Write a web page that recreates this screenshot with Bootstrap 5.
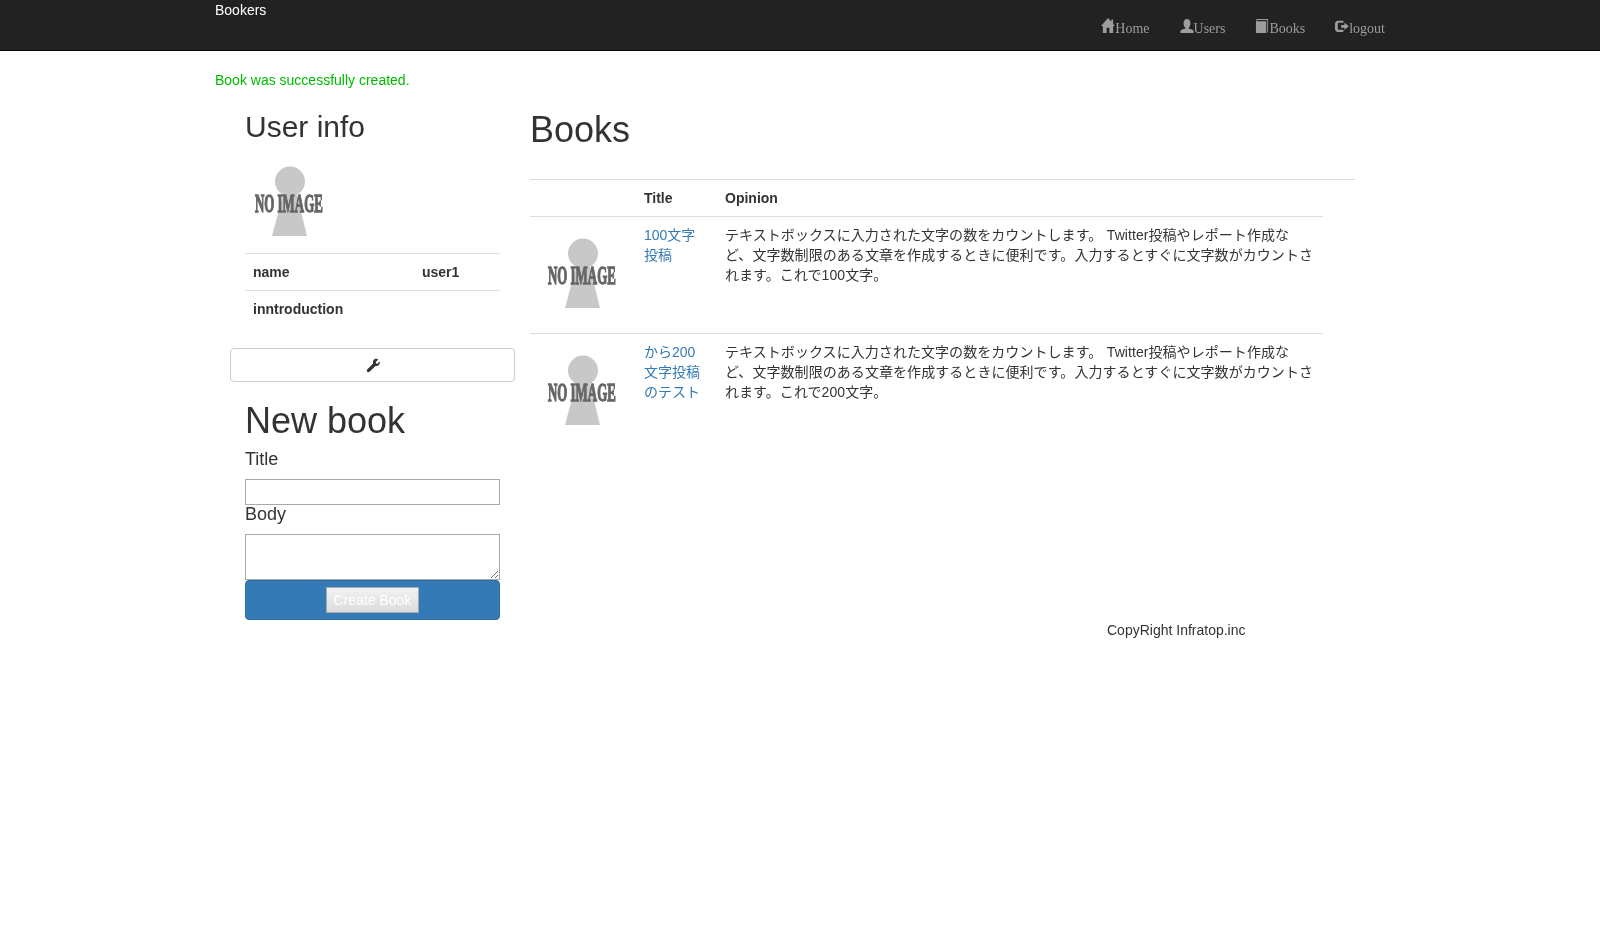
<!DOCTYPE html>
<html lang="en">

<head>
    <meta charset="UTF-8">
    <meta name="viewport" content="width=device-width, initial-scale=1.0">
    <title>Bookers</title>
    <link href="https://cdn.jsdelivr.net/npm/bootstrap@5.3.0/dist/css/bootstrap.min.css" rel="stylesheet">
    <style>
        body {
            font-family: "Liberation Sans", "Noto Sans CJK JP", sans-serif;
            font-size: 14px;
            line-height: 20px;
            color: #333;
        }

        .top-bar {
            height: 51px;
            background: #222;
            border-bottom: 1px solid #080808;
        }

        .page-wrap {
            width: 1170px;
            margin: 0 auto;
            will-change: transform;
        }

        .brand-link {
            color: #fff;
            text-decoration: none;
            display: block;
            height: 20px;
        }

        .menu-list {
            margin: 11px -15px 0 0;
        }

        .menu-link {
            display: flex;
            align-items: flex-end;
            height: 28px;
            padding: 0 15px;
            color: #9d9d9d;
            text-decoration: none;
            font-family: "Liberation Serif", serif;
            font-size: 14px;
            line-height: 20px;
        }

        .menu-link svg {
            display: block;
            width: 14px;
            height: 15px;
            margin-bottom: 6px;
            fill: #9d9d9d;
        }

        .flash-note {
            color: #0b0;
            margin: 19px 0 0;
            height: 20px;
        }

        .side-col {
            width: 285px;
            padding: 0 15px;
            margin-left: 15px;
            flex: none;
        }

        .main-col {
            width: 855px;
            padding: 0 15px;
            flex: none;
        }

        .side-title {
            font-size: 30px;
            line-height: 33px;
            font-weight: 500;
            margin: 20px 0 10px;
        }

        .noimage {
            display: block;
        }

        .noimage text {
            font-family: "Liberation Serif", serif;
            font-weight: 700;
            font-size: 19px;
            fill: #666;
            stroke: #666;
            stroke-width: 1;
        }

        .user-table {
            width: 255px;
            margin-bottom: 21px;
            table-layout: fixed;
        }

        .book-table td,
        .book-table th {
            padding: 8px;
            border-top: 1px solid #ddd;
            vertical-align: top;
            line-height: 20px;
        }

        .user-table th,
        .user-table td {
            padding: 8px;
            border-top: 1px solid #ddd;
            font-weight: 700;
            line-height: 20px;
        }

        .edit-btn {
            display: flex;
            align-items: center;
            justify-content: center;
            height: 34px;
            margin: 0 -15px;
            border: 1px solid #ccc;
            border-radius: 4px;
            background: #fff;
        }

        .new-title {
            font-size: 36px;
            line-height: 40px;
            font-weight: 500;
            margin: 19px 0 9px;
        }

        .field-label {
            display: block;
            font-size: 18px;
            line-height: 20px;
            margin: -1px 0 10px;
        }

        .field-box {
            display: block;
            width: 255px;
            height: 26px;
            border: 1px solid #a9a9a9;
            border-radius: 0;
            padding: 1px 2px;
            margin: 0;
        }

        textarea.field-box {
            height: 46px;
        }

        .submit-wrap {
            display: flex;
            align-items: center;
            justify-content: center;
            height: 40px;
            background: #337ab7;
            border: 1px solid #2e6da4;
            border-radius: 4px;
        }

        .submit-btn {
            width: 93px;
            height: 26px;
            padding: 0;
            color: #fff;
            font-size: 14px;
            line-height: 20px;
            border: 1px solid #a9a9a9;
            background: linear-gradient(#f2f2f2, #dcdcdc);
        }

        .main-title {
            font-size: 36px;
            line-height: 40px;
            font-weight: 500;
            margin: 20px 0 10px;
        }

        .head-rule {
            height: 1px;
            width: 825px;
            background: #ddd;
            margin: 29px 0 0;
        }

        .book-table {
            width: 793px;
            table-layout: fixed;
        }

        .book-table thead th {
            border-top: 0;
            border-bottom: 1px solid #ddd;
            font-weight: 700;
        }

        .book-table a {
            color: #337ab7;
            text-decoration: none;
        }

        .opinion-text {
            word-spacing: 0.5px;
            letter-spacing: 0.06px;
        }

        .copy-line {
            margin: 0;
            height: 20px;
            padding-left: 892px;
        }
    </style>
</head>

<body>
    <nav class="top-bar">
        <div class="page-wrap d-flex justify-content-between align-items-start">
            <a class="brand-link" href="#">Bookers</a>
            <ul class="menu-list d-flex list-unstyled">
                <li><a class="menu-link" href="#">
                        <svg viewBox="0 1 15 14" preserveAspectRatio="none"><path d="M7.500 1 11 4.500V2.500h2v4l2 2h-2V15H9V10H6v5H2V8.500H0z"/></svg>Home</a></li>
                <li><a class="menu-link" href="#">
                        <svg viewBox="0 1 15 14" preserveAspectRatio="none"><path d="M7.500 2C9.900 2 11.200 3.600 11.200 5.800c0 2-.8 3.400-1.800 4.200v1c2.500.4 4.800 1 5.100 2.200V15H.5v-1.800c.3-1.200 2.600-1.800 5.100-2.200v-1C4.600 9.200 3.800 7.800 3.800 5.800 3.800 3.600 5.100 2 7.500 2z"/></svg>Users</a></li>
                <li><a class="menu-link" href="#">
                        <svg viewBox="0 1 15 14" preserveAspectRatio="none"><path d="M1 3.500C1 2.600 1.800 2 3 2h11v12.500h-.9V2.900H3c-.5 0-.9.2-1 .6z M1 4h11v11H1z"/></svg>Books</a></li>
                <li><a class="menu-link" href="#">
                        <svg viewBox="0 1 15 14" preserveAspectRatio="none"><path d="M3 3.500h6v2H4.200C3.500 5.500 3 6 3 6.700v4.100c0 .7.500 1.200 1.200 1.200H9v2H3c-1.700 0-3-1.300-3-3V6.500c0-1.700 1.300-3 3-3z M6.500 7.500H10V5.500l5 3.300-5 3.200v-2H6.500z"/></svg>logout</a></li>
            </ul>
        </div>
    </nav>

    <div class="page-wrap">
        <p class="flash-note">Book was successfully created.</p>
        <div class="d-flex align-items-start">
            <div class="side-col">
                <h2 class="side-title">User info</h2>
                <svg class="noimage" width="100" height="100" viewBox="0 0 100 100"><circle cx="45" cy="28.500" r="15" fill="#c8c8c8"/><path d="M38 42h14l10 41H27z" fill="#c8c8c8"/><text transform="translate(10 59) scale(.68 1.35)">NO IMAGE</text></svg>
                <table class="user-table">
                    <colgroup><col style="width:169px"><col></colgroup>
                    <tbody>
                        <tr><th>name</th><th>user1</th></tr>
                        <tr><th>inntroduction</th><th></th></tr>
                    </tbody>
                </table>
                <a class="edit-btn" href="#">
                    <svg width="15" height="15" viewBox="0 0 15 15"><path d="M9.500 1.200c1.300-.6 2.800-.4 3.800.4L10.800 4l.3 1.400 1.400.3 2-2.300c.6 1.200.4 2.700-.6 3.700-.9.900-2.300 1.200-3.400.8L4.500 13.800c-.6.600-1.700.6-2.300 0-.6-.6-.6-1.600 0-2.200l5.900-6.100C7.600 4 8.200 2 9.500 1.200z" fill="#333"/></svg>
                </a>
                <h1 class="new-title">New book</h1>
                <form>
                    <label class="field-label" for="book-title">Title</label>
                    <input class="field-box" id="book-title" type="text">
                    <label class="field-label" for="book-body">Body</label>
                    <textarea class="field-box" id="book-body"></textarea>
                    <div class="submit-wrap"><button class="submit-btn" type="button">Create Book</button></div>
                </form>
            </div>
            <div class="main-col">
                <h1 class="main-title">Books</h1>
                <div class="head-rule"></div>
                <table class="book-table">
                    <colgroup><col style="width:106px"><col style="width:81px"><col></colgroup>
                    <thead>
                        <tr><th></th><th>Title</th><th>Opinion</th></tr>
                    </thead>
                    <tbody>
                        <tr>
                            <td><svg class="noimage" width="90" height="100" viewBox="0 0 90 100"><circle cx="45" cy="28.500" r="15" fill="#c8c8c8"/><path d="M38 42h14l10 41H27z" fill="#c8c8c8"/><text transform="translate(10 59) scale(.68 1.35)">NO IMAGE</text></svg></td>
                            <td><a href="#">100文字投稿</a></td>
                            <td class="opinion-text">テキストボックスに入力された文字の数をカウントします。 Twitter投稿やレポート作成など、文字数制限のある文章を作成するときに便利です。入力するとすぐに文字数がカウントされます。これで100文字。</td>
                        </tr>
                        <tr>
                            <td><svg class="noimage" width="90" height="100" viewBox="0 0 90 100"><circle cx="45" cy="28.500" r="15" fill="#c8c8c8"/><path d="M38 42h14l10 41H27z" fill="#c8c8c8"/><text transform="translate(10 59) scale(.68 1.35)">NO IMAGE</text></svg></td>
                            <td><a href="#">から200文字投稿のテスト</a></td>
                            <td class="opinion-text">テキストボックスに入力された文字の数をカウントします。 Twitter投稿やレポート作成など、文字数制限のある文章を作成するときに便利です。入力するとすぐに文字数がカウントされます。これで200文字。</td>
                        </tr>
                    </tbody>
                </table>
            </div>
        </div>
        <p class="copy-line">CopyRight Infratop.inc</p>
    </div>

    <script src="https://cdn.jsdelivr.net/npm/bootstrap@5.3.0/dist/js/bootstrap.bundle.min.js"></script>
</body>

</html>
